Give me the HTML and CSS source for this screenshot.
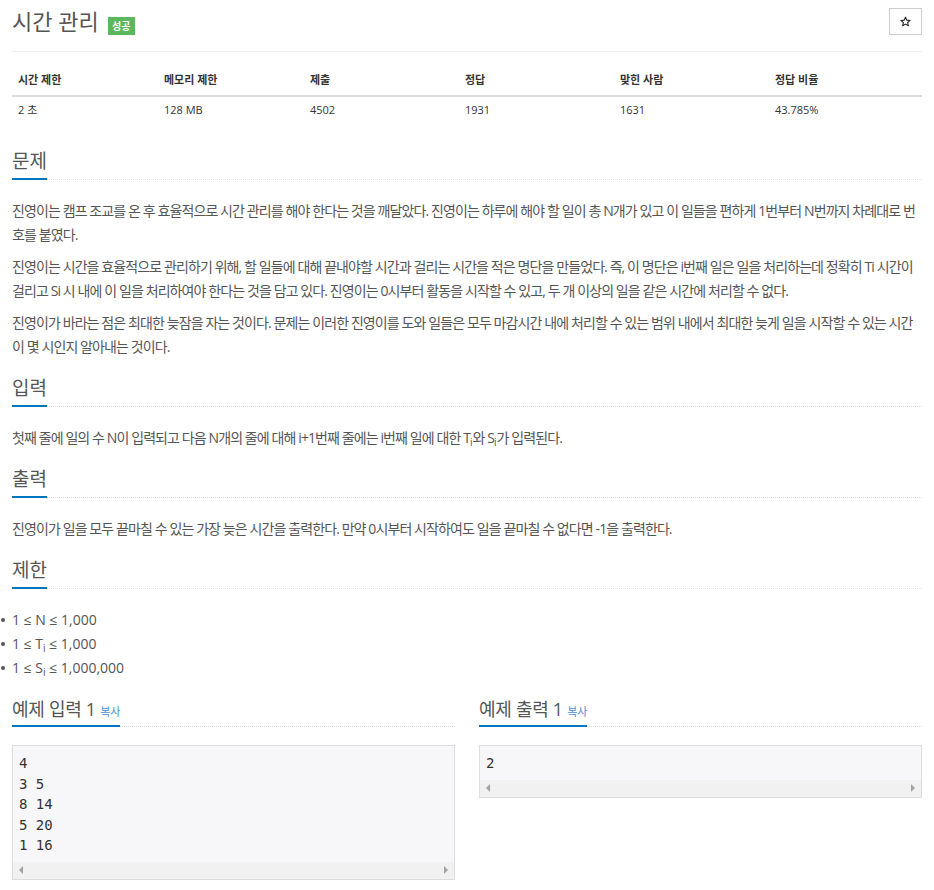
FILE: index.html
```html
<!DOCTYPE html>
<html lang="ko">

<head>
    <meta charset="UTF-8" />
    <meta name="viewport" content="width=device-width, initial-scale=1.0" />
    <title>시간 관리</title>
    <link rel="stylesheet" href="styles.css">
</head>

<body class="page">
    <div class="wrap">
        <header class="page-header">
            <div class="title-box">
                <h1 class="title">시간 관리</h1>
                <span class="badge-ok">성공</span>
            </div>
            <button class="star-bttn">
                <svg width="11" height="11" viewBox="0 0 24 24">
                    <path d="M12 2.5l2.9 6.6 7.1.6-5.4 4.7 1.6 7-6.2-3.7-6.2 3.7 1.6-7-5.4-4.7 7.1-.6z" fill="none" stroke="rgb(34, 34, 34)" stroke-width="2.4" stroke-linejoin="round" />
                </svg>
            </button>
        </header>

        <table class="info-table">
            <thead>
                <tr>
                    <th class="col-a">시간 제한</th>
                    <th class="col-a">메모리 제한</th>
                    <th class="col-b">제출</th>
                    <th class="col-b">정답</th>
                    <th class="col-b">맞힌 사람</th>
                    <th>정답 비율</th>
                </tr>
            </thead>
            <tbody>
                <tr>
                    <td>2 초 </td>
                    <td>128 MB</td>
                    <td>4502</td>
                    <td>1931</td>
                    <td>1631</td>
                    <td>43.785%</td>
                </tr>
            </tbody>
        </table>

        <section class="sect">
            <div class="headline">
                <h2 class="headline-h2">문제</h2>
            </div>
            <p class="txt">진영이는 캠프 조교를 온 후 효율적으로 시간 관리를 해야 한다는 것을 깨달았다. 진영이는 하루에 해야 할 일이 총 N개가 있고 이 일들을 편하게 1번부터 N번까지 차례대로 번호를 붙였다.</p>
            <p class="txt">진영이는 시간을 효율적으로 관리하기 위해, 할 일들에 대해 끝내야할 시간과 걸리는 시간을 적은 명단을 만들었다. 즉, 이 명단은 i번째 일은 일을 처리하는데 정확히 Ti 시간이 걸리고 Si 시 내에 이 일을 처리하여야 한다는 것을 담고 있다. 진영이는 0시부터 활동을 시작할 수 있고, 두 개 이상의 일을 같은 시간에 처리할 수 없다.</p>
            <p class="txt">진영이가 바라는 점은 최대한 늦잠을 자는 것이다. 문제는 이러한 진영이를 도와 일들은 모두 마감시간 내에 처리할 수 있는 범위 내에서 최대한 늦게 일을 시작할 수 있는 시간이 몇 시인지 알아내는 것이다.</p>
        </section>

        <section class="sect">
            <div class="headline">
                <h2 class="headline-h2">입력</h2>
            </div>
            <p class="txt">첫째 줄에 일의 수 N이 입력되고 다음 N개의 줄에 대해 i+1번째 줄에는 i번째 일에 대한 T<sub>i</sub>와 S<sub>i</sub>가 입력된다.</p>
        </section>

        <section class="sect">
            <div class="headline">
                <h2 class="headline-h2">출력</h2>
            </div>
            <p class="txt">진영이가 일을 모두 끝마칠 수 있는 가장 늦은 시간을 출력한다. 만약 0시부터 시작하여도 일을 끝마칠 수 없다면 -1을 출력한다.</p>
        </section>

        <section class="sect">
            <div class="headline">
                <h2 class="headline-h2">제한</h2>
            </div>
            <ul class="limits">
                <li class="limits-li">1 ≤ N ≤ 1,000</li>
                <li class="limits-li">1 ≤ T<sub>i</sub> ≤ 1,000</li>
                <li class="limits-li">1 ≤ S<sub>i</sub> ≤ 1,000,000</li>
            </ul>
        </section>

        <div class="samples">
            <section class="sample">
                <div class="headline">
                    <h2 class="headline-h2 small-h2">예제 입력 1 <span class="copy-link">복사</span></h2>
                </div>
                <div class="sample-box">
                    <pre class="sample-pre">4
3 5
8 14
5 20
1 16</pre>
                    <div class="fake-scroll"><span class="arr-l"></span><span class="arr-r"></span></div>
                </div>
            </section>
            <section class="sample">
                <div class="headline">
                    <h2 class="headline-h2 small-h2">예제 출력 1 <span class="copy-link">복사</span></h2>
                </div>
                <div class="sample-box">
                    <pre class="sample-pre">2</pre>
                    <div class="fake-scroll"><span class="arr-l"></span><span class="arr-r"></span></div>
                </div>
            </section>
        </div>
    </div>
</body>

</html>
```

FILE: styles.css
```css
.page {
    margin: 0;
    background-color: rgb(255, 255, 255);
    color: rgb(85, 85, 85);
    font-family: "Open Sans", "Noto Sans CJK KR", sans-serif;
    font-size: 14px;
    font-feature-settings: "palt";
}

.wrap {
    padding: 0 12px;
}

.page-header {
    display: flex;
    justify-content: space-between;
    align-items: center;
    padding: 7px 0 16px 0;
    border-bottom: 1px solid rgb(238, 238, 238);
}

.title-box {
    display: flex;
    align-items: center;
}

.title {
    margin: 0;
    font-size: 22px;
    font-weight: 400;
    line-height: 27px;
    color: rgb(85, 85, 85);
}

.badge-ok {
    margin: 10px 0 0 9px;
    width: 27px;
    height: 18px;
    line-height: 18px;
    text-align: center;
    background-color: rgb(92, 184, 92);
    color: rgb(255, 255, 255);
    font-size: 10px;
    font-weight: 700;
}

.star-bttn {
    display: flex;
    align-items: center;
    justify-content: center;
    width: 33px;
    height: 27px;
    padding: 0;
    border: 1px solid rgb(204, 204, 204);
    background-color: rgb(255, 255, 255);
}

.info-table {
    width: 100%;
    margin-top: 12px;
    border-collapse: collapse;
    table-layout: fixed;
    font-size: 11px;
    color: rgb(51, 51, 51);
}

.col-a {
    width: 134px;
}

.col-b {
    width: 143px;
}

.info-table th {
    text-align: left;
    font-weight: 700;
    line-height: 18px;
    padding: 7px 6px 6px 6px;
    border-bottom: 2px solid rgb(221, 221, 221);
}

.info-table td {
    line-height: 18px;
    padding: 4px 6px 6px 6px;
}

.sect {
    padding-bottom: 7px;
}

.info-table + .sect {
    margin-top: 22px;
}

.headline {
    border-bottom: 1px dotted rgb(221, 221, 221);
    margin-bottom: 19px;
}

.headline-h2 {
    display: inline-block;
    margin: 0 0 -1px 0;
    padding-bottom: 3px;
    font-size: 19px;
    font-weight: 400;
    line-height: 28px;
    color: rgb(85, 85, 85);
    border-bottom: 2px solid rgb(0, 118, 192);
}

.small-h2 {
    height: 28px;
    padding-bottom: 2px;
    font-size: 18px;
    letter-spacing: -0.3px;
}

.sample .headline {
    margin-bottom: 18px;
}

.txt {
    margin: 0 0 8px 0;
    line-height: 24px;
    letter-spacing: -0.9px;
}

.txt sub,
.limits sub {
    font-size: 10px;
    line-height: 0;
    vertical-align: -3px;
    letter-spacing: 0;
}

.limits {
    margin: 0 0 8px 0;
    padding: 0;
    line-height: 24px;
    list-style: none;
}

.limits-li {
    position: relative;
}

.limits-li::before {
    content: "";
    position: absolute;
    left: -11px;
    top: 10px;
    width: 4px;
    height: 4px;
    border-radius: 50%;
    background-color: rgb(85, 85, 85);
}

.samples {
    display: grid;
    grid-template-columns: 1fr 1fr;
    gap: 24px;
}

.copy-link {
    font-size: 11px;
    line-height: 1;
    letter-spacing: 0;
    color: rgb(76, 145, 210);
}

.sample-box {
    border: 1px solid rgb(221, 221, 221);
    background-color: rgb(247, 247, 249);
}

.sample-pre {
    margin: 0;
    padding: 7px 6px 6px 6px;
    font-family: "DejaVu Sans Mono", monospace;
    font-size: 14px;
    line-height: 20.5px;
    color: rgb(51, 51, 51);
}

.fake-scroll {
    display: flex;
    justify-content: space-between;
    align-items: center;
    height: 17px;
    padding: 0 6px;
    background-color: rgb(241, 241, 241);
}

.arr-l {
    width: 0;
    height: 0;
    border-top: 4px solid transparent;
    border-bottom: 4px solid transparent;
    border-right: 4px solid rgb(163, 163, 163);
}

.arr-r {
    width: 0;
    height: 0;
    border-top: 4px solid transparent;
    border-bottom: 4px solid transparent;
    border-left: 4px solid rgb(163, 163, 163);
}
```
